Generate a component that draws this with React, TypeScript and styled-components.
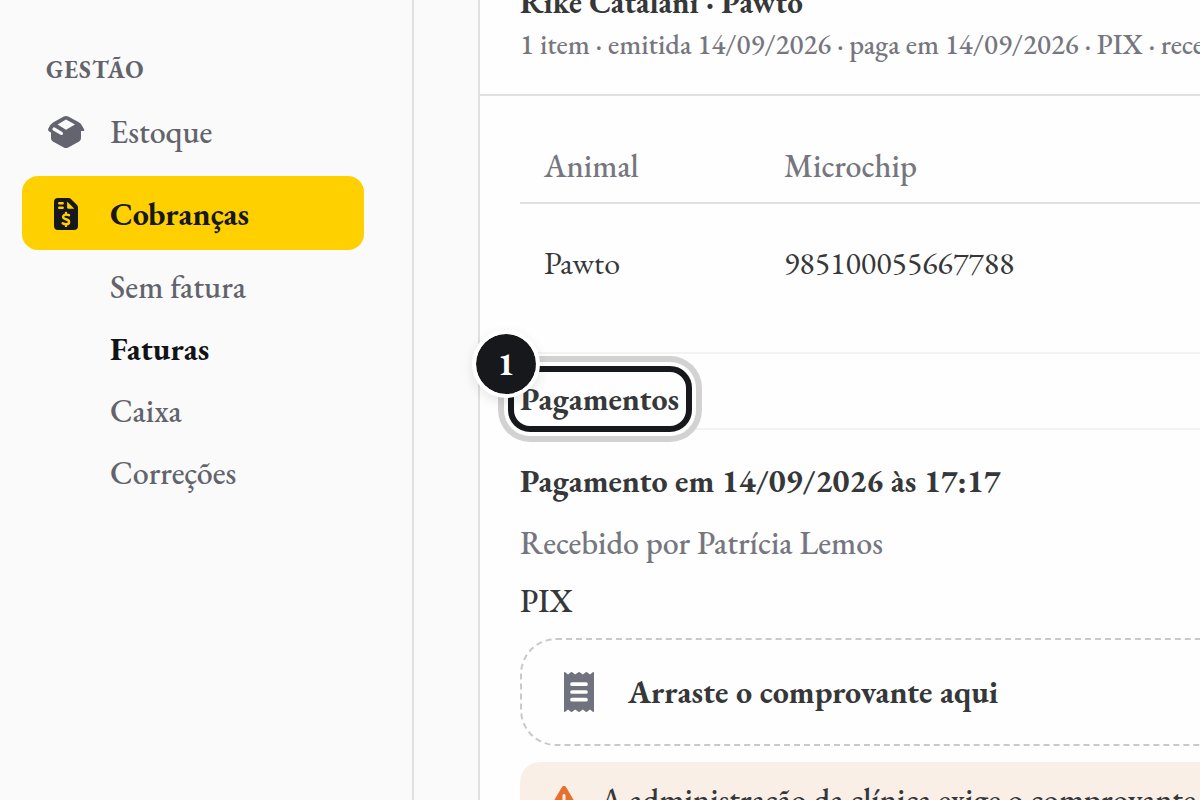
import React from "react";
import styled, { createGlobalStyle, css } from "styled-components";
import { FaTriangleExclamation } from "react-icons/fa6";

const GlobalStyle = createGlobalStyle`
  *, *::before, *::after { box-sizing: border-box; }
  html, body { margin: 0; height: 100%; overflow: hidden; }
  body {
    background: #fafafb;
    color: #363738;
    font-family: "EB Garamond", "Liberation Serif", serif;
    font-size: 32px;
    font-weight: 500;
    line-height: 40px;
  }
  #root { height: 100%; }
  h1, h2, h3, p, ul { margin: 0; padding: 0; font-size: inherit; }
`;

const Shell = styled.div`
  display: flex;
  height: 100vh;
  overflow: hidden;
`;

const Sidebar = styled.nav`
  flex: 0 0 414px;
  padding: 54px 48px 0 22px;
  border-right: 2px solid #e0e0e1;
`;

const GroupTitle = styled.h2`
  padding-left: 24px;
  color: #63646b;
  font-size: 24px;
  line-height: 32px;
  letter-spacing: 1px;
  text-transform: uppercase;
`;

const NavList = styled.ul`
  list-style: none;
`;

const navLink = css`
  display: flex;
  align-items: center;
  color: #63646b;
  text-decoration: none;
`;

const NavLink = styled.a<{ $active?: boolean }>`
  ${navLink}
  height: ${(p) => (p.$active ? 74 : 90)}px;
  padding: 2px 0 0 24px;
  gap: 24px;
  border-radius: 16px;
  ${(p) =>
    p.$active &&
    css`
      background: #ffd000;
      color: #17181b;
      font-weight: 700;
    `}
`;

const IconSlot = styled.span`
  display: flex;
  justify-content: center;
  width: 40px;
`;

const SubList = styled(NavList)`
  padding-top: 6px;
`;

const SubLink = styled.a<{ $active?: boolean }>`
  ${navLink}
  height: 62px;
  padding-left: 88px;
  ${(p) =>
    p.$active &&
    css`
      color: #121316;
      font-weight: 700;
    `}
`;

const Main = styled.main`
  flex: 1;
  min-width: 0;
  padding-left: 64px;
  overflow: hidden;
`;

const Card = styled.article`
  margin-top: -50px;
  border-left: 2px solid #e0e0e1;
  background: #fefefe;
`;

const CardHeader = styled.header`
  padding: 32px 0 32px 40px;
  border-bottom: 2px solid #e0e0e1;
  white-space: nowrap;
`;

const CardTitle = styled.h1`
  font-size: 31px;
  font-weight: 700;
`;

const CardMeta = styled.p`
  margin-top: 4px;
  color: #76777e;
  font-size: 28px;
  line-height: 36px;
`;

const CardBody = styled.div`
  padding: 32px 0 32px 40px;
`;

const Table = styled.table`
  width: 100%;
  margin-bottom: 30px;
  border-collapse: separate;
  border-spacing: 0;
  table-layout: fixed;
  text-align: left;

  th, td { padding: 0 24px; }
  th:first-child { width: 240px; }
  th {
    height: 76px;
    padding-top: 2px;
    border-bottom: 2px solid #e0e0e1;
    color: #76777e;
    font-weight: 500;
  }
  td {
    height: 118px;
    font-weight: 400;
  }
`;

const SectionBand = styled.div`
  padding: 24px 0 8px;
  border-top: 2px solid #f3f3f4;
  border-bottom: 2px solid #f3f3f4;
`;

const SectionTitle = styled.h2`
  position: relative;
  width: fit-content;
  line-height: 42px;
`;

const Highlight = styled.span`
  position: absolute;
  inset: -12px -13px -12px -12px;
  border: 6px solid #17181b;
  border-radius: 22px;
  box-shadow: 0 0 0 4px #fff, 0 0 0 10px #d2d2d2;
`;

const StepBadge = styled.span`
  position: absolute;
  top: -48px;
  left: -48px;
  width: 68px;
  height: 68px;
  border: 4px solid #fff;
  border-radius: 50%;
  background: #17181b;
  background-clip: padding-box;
  box-shadow: 0 4px 12px rgba(0, 0, 0, 0.1);
  color: #fff;
  line-height: 60px;
  text-align: center;
`;

const Payment = styled.section`
  padding-top: 31px;
`;

const PaymentTitle = styled.h3`
  font-weight: 700;
`;

const ReceivedBy = styled.p`
  margin: 22px 0 18px;
  color: #76777e;
`;

const DropZone = styled.button`
  display: flex;
  align-items: center;
  gap: 34px;
  width: calc(100% + 40px);
  height: 108px;
  margin: 17px 0 16px;
  padding: 0 42px;
  border: 2px dashed #c9c9cb;
  border-radius: 36px;
  background: transparent;
  color: inherit;
  font: inherit;
  font-weight: 700;
`;

const Alert = styled.div`
  display: flex;
  align-items: flex-start;
  gap: 20px;
  padding: 18px 0 40px 28px;
  border-radius: 20px 0 0 20px;
  background: #faefe7;
  white-space: nowrap;
`;

const WarningIcon = styled(FaTriangleExclamation)`
  flex: none;
  width: 32px;
  height: 32px;
  margin-top: 4px;
  color: #e8702f;
`;

const BoxIcon = () => (
  <svg width="38" height="34" viewBox="0 0 38 34" aria-hidden="true">
    <path
      d="M16.8 1.6Q19 .4 21.2 1.6L31.4 7.1Q34.2 8.7 35.2 11L37.2 14.6Q37.8 16.1 36.1 16.1L34 15.9V23.3Q34 25.4 32.2 26.4L21.2 32.5Q19 33.6 16.8 32.5L5.8 26.4Q4 25.4 4 23.3V17.6L2.1 16.5Q.5 15.5 1.2 13.7Q2.9 9.3 6 7.4Z"
      fill="#63646f"
    />
    <path d="M19 4.4L28 9.6L19 14.8L10.6 9.6Z" fill="#fafafb" />
    <path d="M7 14L14.4 18.4" stroke="#fafafb" strokeWidth="3.2" strokeLinecap="round" />
  </svg>
);

const InvoiceIcon = () => (
  <svg width="24" height="32" viewBox="0 0 24 32" aria-hidden="true">
    <path
      d="M4 0H14.4Q16 0 17.2 1.2L22.8 6.8Q24 8 24 9.6V28Q24 32 20 32H4Q0 32 0 28V4Q0 0 4 0Z"
      fill="#17181b"
    />
    <path d="M13.1 3.6V9.2Q13.1 10.7 14.6 10.7H20.3Z" fill="#ffd000" />
    <path d="M5.2 5.2H8.7M5.2 9.7H8.7" stroke="#ffd000" strokeWidth="2.4" strokeLinecap="round" />
    <path
      d="M12 14.9V16.6M12 26.2V27.9M15 17.2C13.8 16.7 12.9 16.6 12 16.6C10.4 16.6 9.1 17.4 9.1 18.8C9.1 22 15.1 20.5 15.1 23.9C15.1 25.4 13.7 26.2 12.1 26.2C10.8 26.2 9.8 25.8 8.7 25.3"
      fill="none"
      stroke="#ffd000"
      strokeWidth="2.4"
      strokeLinecap="round"
    />
  </svg>
);

const ReceiptIcon = () => (
  <svg width="30" height="40" viewBox="0 0 30 40" aria-hidden="true">
    <path
      d="M0 1Q0-.4 1.3.3L4 2.6L7 .3Q7.6-.1 8.2.3L11.2 2.6L14.4.3Q15 -.1 15.6.3L18.8 2.6L21.8.3Q22.4-.1 23 .3L26 2.6L28.7.3Q30-.4 30 1V39Q30 40.4 28.7 39.7L26 37.4L23 39.7Q22.4 40.1 21.8 39.7L18.8 37.4L15.6 39.7Q15 40.1 14.4 39.7L11.2 37.4L8.2 39.7Q7.6 40.1 7 39.7L4 37.4L1.3 39.7Q0 40.4 0 39Z"
      fill="#70727d"
    />
    <path d="M8 12.2H22M8 20H22M8 27.7H22" stroke="#fefefe" strokeWidth="3.7" strokeLinecap="round" />
  </svg>
);

const subItems = ["Sem fatura", "Faturas", "Caixa", "Correções"];

export default function App() {
  return (
    <>
      <GlobalStyle />
      <Shell>
        <Sidebar aria-label="Gestão">
          <GroupTitle>Gestão</GroupTitle>
          <NavList>
            <li>
              <NavLink href="#estoque">
                <IconSlot><BoxIcon /></IconSlot>
                Estoque
              </NavLink>
            </li>
            <li>
              <NavLink href="#cobrancas" $active>
                <IconSlot><InvoiceIcon /></IconSlot>
                Cobranças
              </NavLink>
              <SubList>
                {subItems.map((item) => (
                  <li key={item}>
                    <SubLink href="#cobrancas" $active={item === "Faturas"}>{item}</SubLink>
                  </li>
                ))}
              </SubList>
            </li>
          </NavList>
        </Sidebar>
        <Main>
          <Card>
            <CardHeader>
              <CardTitle>Rike Catalani · Pawto</CardTitle>
              <CardMeta>
                1 item · emitida 14/09/2026 · paga em 14/09/2026 · PIX · recebido
              </CardMeta>
            </CardHeader>
            <CardBody>
              <Table>
                <thead>
                  <tr><th scope="col">Animal</th><th scope="col">Microchip</th></tr>
                </thead>
                <tbody>
                  <tr><td>Pawto</td><td>985100055667788</td></tr>
                </tbody>
              </Table>
              <SectionBand>
                <SectionTitle>
                  <Highlight />
                  <StepBadge>1</StepBadge>
                  Pagamentos
                </SectionTitle>
              </SectionBand>
              <Payment>
                <PaymentTitle>Pagamento em 14/09/2026 às 17:17</PaymentTitle>
                <ReceivedBy>Recebido por Patrícia Lemos</ReceivedBy>
                <p>PIX</p>
                <DropZone type="button">
                  <ReceiptIcon />
                  Arraste o comprovante aqui
                </DropZone>
                <Alert role="alert">
                  <WarningIcon aria-hidden="true" />
                  A administração da clínica exige o comprovante
                </Alert>
              </Payment>
            </CardBody>
          </Card>
        </Main>
      </Shell>
    </>
  );
}
